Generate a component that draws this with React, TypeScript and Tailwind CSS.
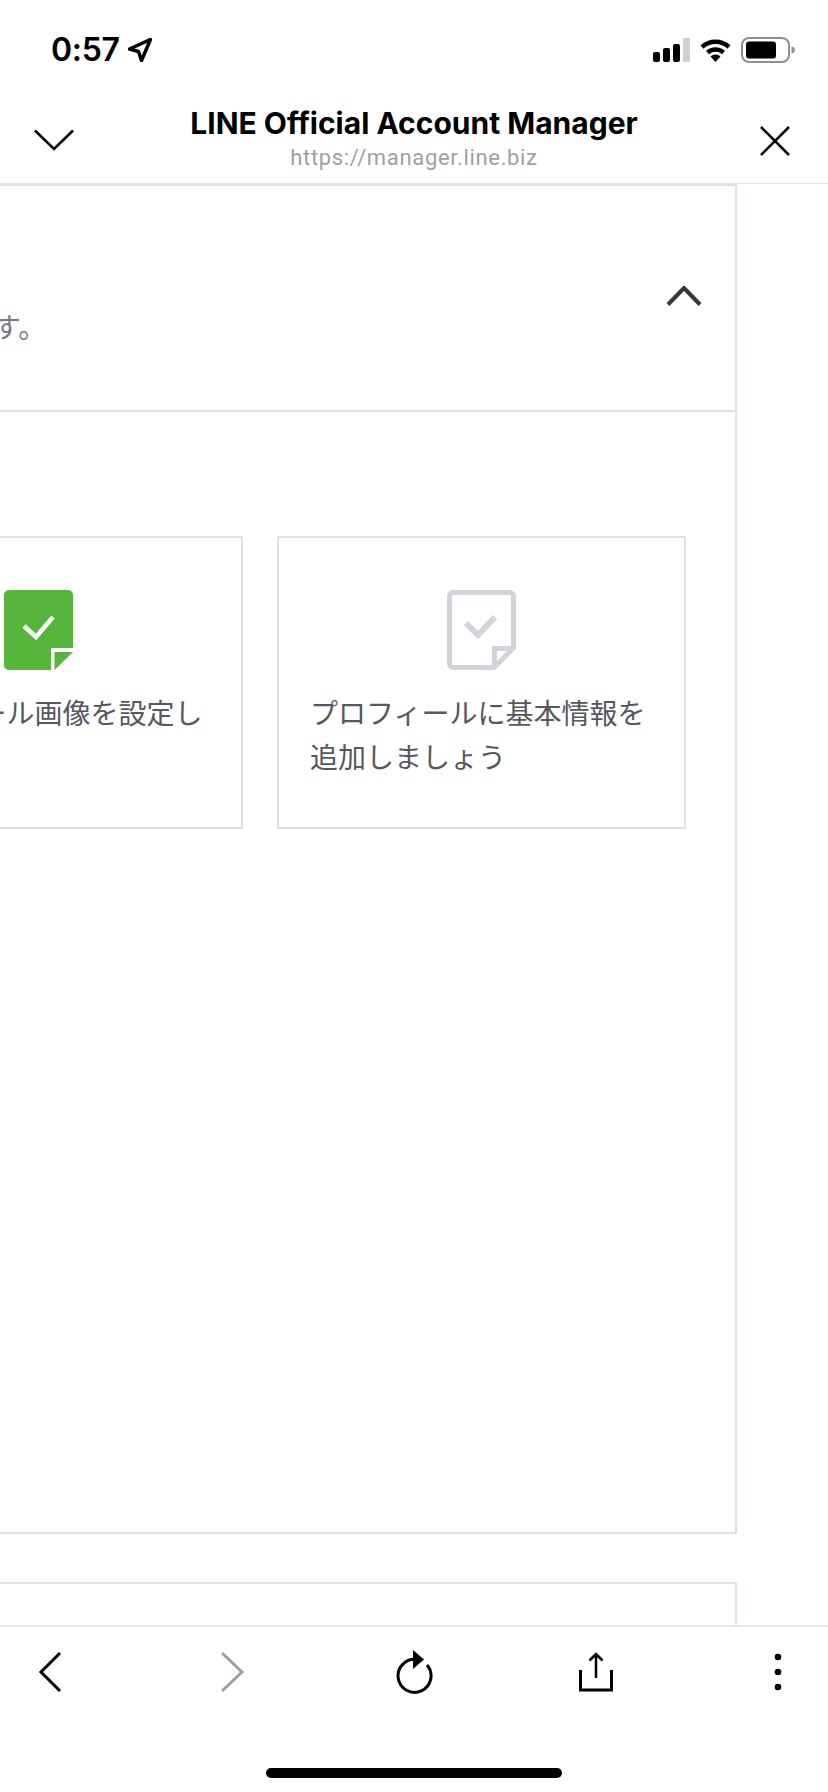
function PageIcon({ done }: { done: boolean }) {
  if (done) {
    return (
      <svg width="69" height="80" viewBox="0 0 69 80" className="shrink-0">
        <path d="M5 0H64a5 5 0 0 1 5 5V58H47V80H5a5 5 0 0 1-5-5V5a5 5 0 0 1 5-5z" fill="#55b63b" />
        <path d="M50.500 62H69L50.500 80z" fill="#55b63b" />
        <path d="M20 36L32 47L49 27" fill="none" stroke="#fff" strokeWidth="4.500" />
      </svg>
    );
  }
  return (
    <svg width="69" height="80" viewBox="0 0 69 80" className="shrink-0">
      <path
        d="M6 2.500H63a3.500 3.500 0 0 1 3.500 3.500V58L47 77.500H6a3.500 3.500 0 0 1-3.500-3.500V6a3.500 3.500 0 0 1 3.500-3.500z"
        fill="none"
        stroke="#d2d4dc"
        strokeWidth="5"
      />
      <path d="M45 58.500H66M47.500 56V77" fill="none" stroke="#d2d4dc" strokeWidth="5" />
      <path d="M19 33L31 45L48 27" fill="none" stroke="#d2d4dc" strokeWidth="6" />
    </svg>
  );
}

function Card({ done, lines }: { done: boolean; lines: string }) {
  return (
    <div className="w-[409px] h-[293px] shrink-0 border-2 border-[#e0e1e5] pt-[52px] px-[31px] flex flex-col">
      <div className="flex justify-center">
        <PageIcon done={done} />
      </div>
      <p className="mt-[20px] text-[28px] leading-[44px] text-[#55585e] font-['Noto_Sans_CJK_JP',sans-serif] font-normal">
        {lines}
      </p>
    </div>
  );
}

export default function App() {
  return (
    <div className="w-[828px] h-[1792px] bg-white overflow-hidden flex flex-col font-['Inter',sans-serif]">
      {/* Status bar */}
      <div className="h-[88px] pt-3 shrink-0 flex items-center justify-between pl-[51px] pr-[33px]">
        <div className="flex items-center gap-[8px]">
          <span className="text-[32px] leading-none font-semibold tracking-[-0.3px] text-black">0:57</span>
          <svg width="24" height="24" viewBox="0 0 24 24">
            <path d="M22.500 1.500L1.500 11L10.500 13.500L13.500 22.500Z" fill="none" stroke="#000" strokeWidth="3.500" strokeLinejoin="round" />
          </svg>
        </div>
        <div className="flex items-center gap-[10px]">
          <svg width="37" height="24" viewBox="0 0 37 24">
            <rect x="0" y="14" width="7" height="10" rx="2" fill="#000" />
            <rect x="10" y="10" width="7" height="14" rx="2" fill="#000" />
            <rect x="20" y="6" width="7" height="18" rx="2" fill="#000" />
            <rect x="30" y="0" width="7" height="24" rx="1" fill="#cfcfcf" />
          </svg>
          <svg width="31" height="24" viewBox="0 0 31 24">
            <path d="M2 9A20 20 0 0 1 29 9" fill="none" stroke="#000" strokeWidth="4.500" />
            <path d="M7.500 14.500A12 12 0 0 1 23.500 14.500" fill="none" stroke="#000" strokeWidth="4.500" />
            <path d="M15.500 24L10.500 18.500A7 7 0 0 1 20.500 18.500Z" fill="#000" />
          </svg>
          <svg width="54" height="26" viewBox="0 0 54 26">
            <rect x="1" y="1" width="47" height="24" rx="7" fill="none" stroke="#8e8e8e" strokeWidth="2" />
            <rect x="5" y="4.500" width="30" height="17" rx="3" fill="#000" />
            <path d="M50.500 9.500C53 10 54 11.500 54 13S53 16 50.500 16.500Z" fill="#8e8e8e" />
          </svg>
        </div>
      </div>

      {/* Browser header */}
      <div className="h-[96px] shrink-0 flex items-start border-b border-[#e6e6e8]">
        <div className="w-[120px] pl-[34px] pt-[41px]">
          <svg width="40" height="22" viewBox="0 0 40 22">
            <path d="M1 1.500L20 20L39 1.500" fill="none" stroke="#000" strokeWidth="2.500" />
          </svg>
        </div>
        <div className="flex-1 flex flex-col items-center pt-[17px]">
          <span className="text-[30px] leading-[36px] font-bold text-black whitespace-nowrap">LINE Official Account Manager</span>
          <span className="text-[22px] leading-[24px] mt-[5px] tracking-[0.66px] text-[#a0a0a0] font-['Roboto',sans-serif] whitespace-nowrap">https://manager.line.biz</span>
        </div>
        <div className="w-[120px] flex justify-end pr-[38px] pt-[38px]">
          <svg width="30" height="30" viewBox="0 0 30 30">
            <path d="M1 1L29 29M29 1L1 29" fill="none" stroke="#000" strokeWidth="2.500" />
          </svg>
        </div>
      </div>

      {/* Page content, scrolled sideways */}
      <div className="flex-1 overflow-hidden">
        <div className="ml-[-200px] w-[937px]">
          <section className="h-[1350px] border-2 border-[#e0e1e5]">
            <div className="h-[226px] border-b-2 border-[#e0e1e5] flex items-start justify-between">
              <p className="ml-[191px] mt-[120px] text-[28px] leading-[40px] text-[#777a88] font-['Noto_Sans_CJK_JP',sans-serif] font-normal whitespace-nowrap">す。</p>
              <svg width="36" height="20" viewBox="0 0 36 20" className="mr-[33px] mt-[100px]">
                <path d="M2 18.500L18 2L34 18.500" fill="none" stroke="#33363b" strokeWidth="4" />
              </svg>
            </div>
            <div className="flex gap-[34px] pl-[32px] pt-[124px]">
              <Card done={true} lines="プロフィール画像を設定しましょう" />
              <Card done={false} lines="プロフィールに基本情報を追加しましょう" />
            </div>
          </section>
          <section className="mt-[48px] h-[60px] border-2 border-[#e0e1e5]" />
        </div>
      </div>

      {/* Bottom toolbar */}
      <div className="h-[167px] shrink-0 bg-white border-t-2 border-[#e8e8ea] flex flex-col">
        <div className="flex justify-between px-[30px] pt-[23px]">
          <svg width="40" height="44" viewBox="0 0 40 44">
            <path d="M30 3L11 22L30 41" fill="none" stroke="#000" strokeWidth="3" />
          </svg>
          <svg width="40" height="44" viewBox="0 0 40 44">
            <path d="M10 3L30 22L10 41" fill="none" stroke="#a0a0a0" strokeWidth="3" />
          </svg>
          <svg width="40" height="44" viewBox="0 0 40 44">
            <path d="M23 9.500A16.500 16.500 0 1 0 33 15" fill="none" stroke="#000" strokeWidth="3" />
            <path d="M19 0L30 9.500L19 19Z" fill="#000" />
          </svg>
          <svg width="40" height="44" viewBox="0 0 40 44">
            <path d="M20 4V28M13.500 10.500L20 4L26.500 10.500" fill="none" stroke="#000" strokeWidth="2.500" />
            <path d="M4.500 20V40H35.500V20" fill="none" stroke="#000" strokeWidth="3" />
          </svg>
          <svg width="40" height="44" viewBox="0 0 40 44">
            <circle cx="20" cy="7" r="3.300" fill="#000" />
            <circle cx="20" cy="22" r="3.300" fill="#000" />
            <circle cx="20" cy="37" r="3.300" fill="#000" />
          </svg>
        </div>
        <div className="mt-[74px] mx-auto w-[296px] h-[10px] rounded-full bg-black" />
      </div>
    </div>
  );
}
